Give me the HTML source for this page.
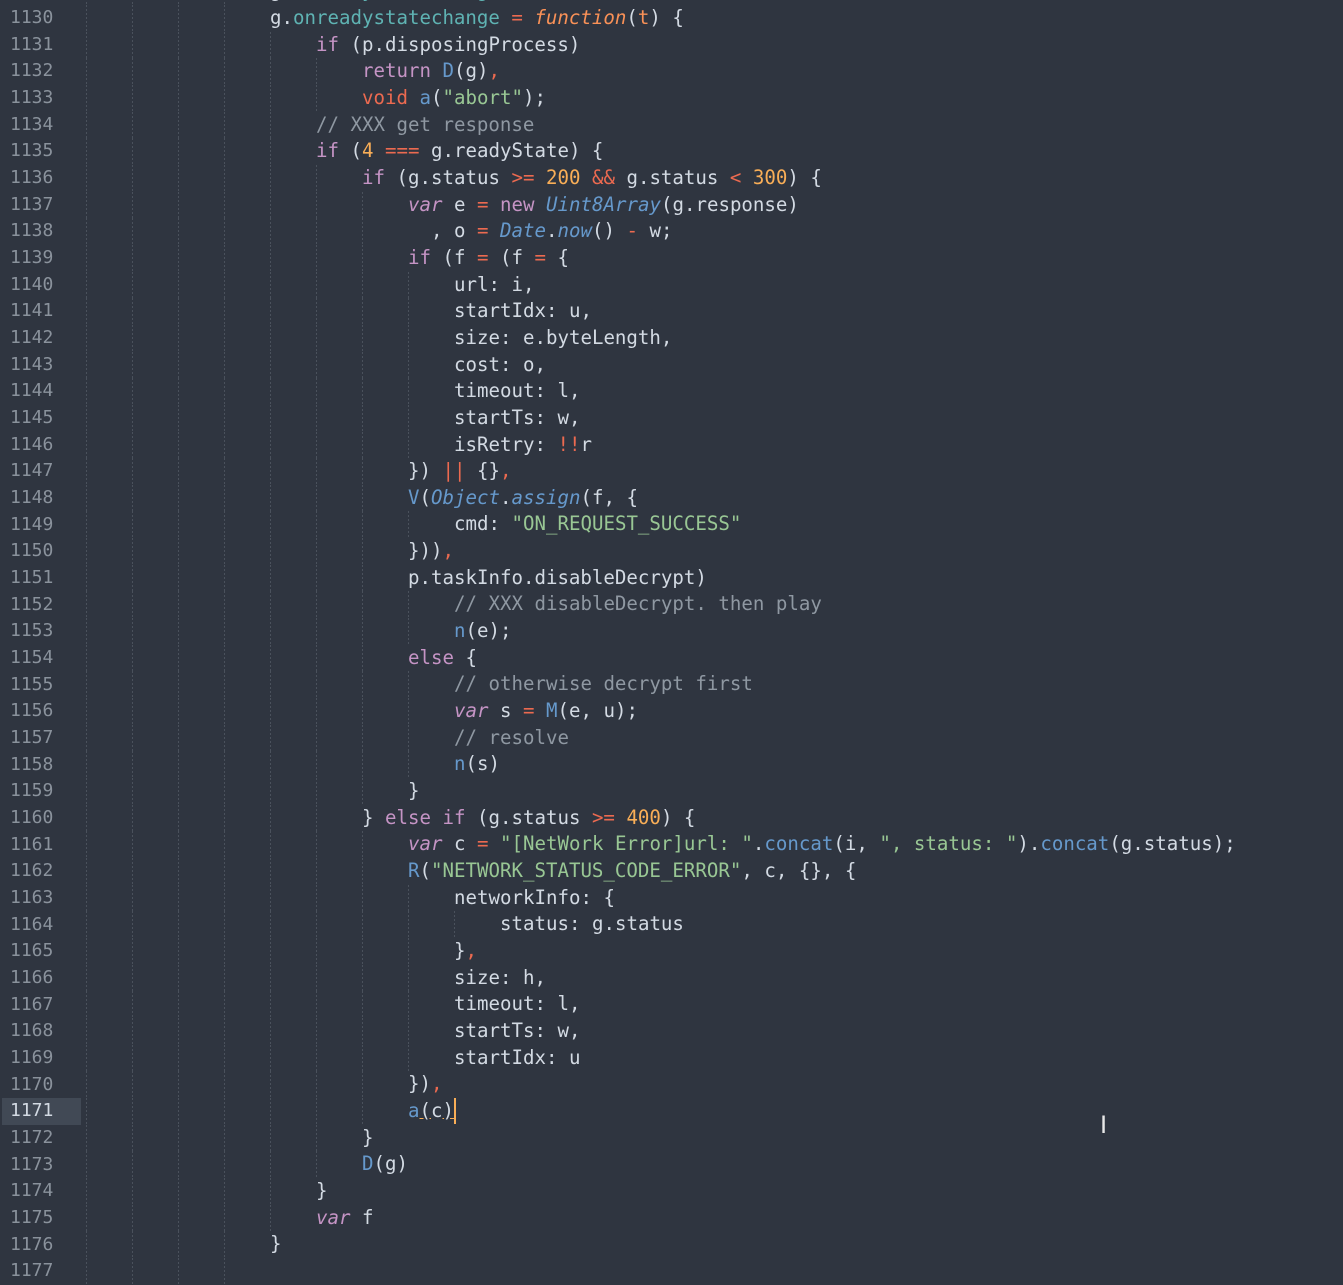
<!DOCTYPE html>
<html><head><meta charset="utf-8"><style>
body{margin:0;width:1343px;height:1270px;background:#2f3540;overflow:hidden;position:relative;font-family:"DejaVu Sans Mono","Liberation Mono",monospace;font-size:19.1px;}
#g{position:absolute;left:0;top:0;width:81px;height:1270px;background:#2f3540;}
.n{position:absolute;left:10px;height:26.67px;line-height:26.67px;color:#8a929c;font-size:18px;}
.hl{position:absolute;left:2px;width:79px;height:26.67px;background:#414955;}
#code{position:absolute;left:86px;top:5px;}
.l{height:26.67px;line-height:26.67px;white-space:pre;color:#d3dae3;}
i{display:inline-block;width:46px;height:26.67px;vertical-align:top;background:repeating-linear-gradient(to bottom,#4a515c 0 2px,transparent 2px 4px) left/1px 100% no-repeat;}
.k{color:#c594c5}.o{color:#ec6a50}.m{color:#f9ae57}.s{color:#99c794}.f{color:#6699cc}.c{color:#8f98a2}.t{color:#5fb3b3}.v{color:#c594c5;font-style:italic}.fi{color:#f99157;font-style:italic}.fb{color:#6699cc;font-style:italic}
.cur{display:inline-block;width:2px;height:26px;background:#f9ae57;vertical-align:top}
.u{text-decoration:underline;text-decoration-color:#f9ae57}
</style></head><body>
<div id="g">
<div class="l" style="position:absolute;left:10px;top:-22px;color:#8a929c;font-size:18px">1129</div>
<div class="hl" style="top:1098px"></div>
</div>
<div id="nums"></div>
<div id="code">
<div class="l" style="position:absolute;top:-26.67px;left:0"><i></i><i></i><i></i><i></i>g.<span class="t">onreadystatechange</span></div>
<div class="l"><i></i><i></i><i></i><i></i>g.<span class="t">onreadystatechange</span> <span class="o">=</span> <span class="fi">function</span>(<span class="fi" style="font-style:normal">t</span>) {</div>
<div class="l"><i></i><i></i><i></i><i></i><i></i><span class="k">if</span> (p.disposingProcess)</div>
<div class="l"><i></i><i></i><i></i><i></i><i></i><i></i><span class="k">return</span> <span class="f">D</span>(g)<span class="o">,</span></div>
<div class="l"><i></i><i></i><i></i><i></i><i></i><i></i><span class="o">void</span> <span class="f">a</span>(<span class="s">"abort"</span>);</div>
<div class="l"><i></i><i></i><i></i><i></i><i></i><span class="c">// XXX get response</span></div>
<div class="l"><i></i><i></i><i></i><i></i><i></i><span class="k">if</span> (<span class="m">4</span> <span class="o">===</span> g.readyState) {</div>
<div class="l"><i></i><i></i><i></i><i></i><i></i><i></i><span class="k">if</span> (g.status <span class="o">&gt;=</span> <span class="m">200</span> <span class="o">&amp;&amp;</span> g.status <span class="o">&lt;</span> <span class="m">300</span>) {</div>
<div class="l"><i></i><i></i><i></i><i></i><i></i><i></i><i></i><span class="v">var</span> e <span class="o">=</span> <span class="k">new</span> <span class="fb">Uint8Array</span>(g.response)</div>
<div class="l"><i></i><i></i><i></i><i></i><i></i><i></i><i></i>  , o <span class="o">=</span> <span class="fb">Date</span>.<span class="fb">now</span>() <span class="o">-</span> w;</div>
<div class="l"><i></i><i></i><i></i><i></i><i></i><i></i><i></i><span class="k">if</span> (f <span class="o">=</span> (f <span class="o">=</span> {</div>
<div class="l"><i></i><i></i><i></i><i></i><i></i><i></i><i></i><i></i>url: i,</div>
<div class="l"><i></i><i></i><i></i><i></i><i></i><i></i><i></i><i></i>startIdx: u,</div>
<div class="l"><i></i><i></i><i></i><i></i><i></i><i></i><i></i><i></i>size: e.byteLength,</div>
<div class="l"><i></i><i></i><i></i><i></i><i></i><i></i><i></i><i></i>cost: o,</div>
<div class="l"><i></i><i></i><i></i><i></i><i></i><i></i><i></i><i></i>timeout: l,</div>
<div class="l"><i></i><i></i><i></i><i></i><i></i><i></i><i></i><i></i>startTs: w,</div>
<div class="l"><i></i><i></i><i></i><i></i><i></i><i></i><i></i><i></i>isRetry: <span class="o">!!</span>r</div>
<div class="l"><i></i><i></i><i></i><i></i><i></i><i></i><i></i>}) <span class="o">||</span> {}<span class="o">,</span></div>
<div class="l"><i></i><i></i><i></i><i></i><i></i><i></i><i></i><span class="f">V</span>(<span class="fb">Object</span>.<span class="fb">assign</span>(f, {</div>
<div class="l"><i></i><i></i><i></i><i></i><i></i><i></i><i></i><i></i>cmd: <span class="s">"ON_REQUEST_SUCCESS"</span></div>
<div class="l"><i></i><i></i><i></i><i></i><i></i><i></i><i></i>}))<span class="o">,</span></div>
<div class="l"><i></i><i></i><i></i><i></i><i></i><i></i><i></i>p.taskInfo.disableDecrypt)</div>
<div class="l"><i></i><i></i><i></i><i></i><i></i><i></i><i></i><i></i><span class="c">// XXX disableDecrypt. then play</span></div>
<div class="l"><i></i><i></i><i></i><i></i><i></i><i></i><i></i><i></i><span class="f">n</span>(e);</div>
<div class="l"><i></i><i></i><i></i><i></i><i></i><i></i><i></i><span class="k">else</span> {</div>
<div class="l"><i></i><i></i><i></i><i></i><i></i><i></i><i></i><i></i><span class="c">// otherwise decrypt first</span></div>
<div class="l"><i></i><i></i><i></i><i></i><i></i><i></i><i></i><i></i><span class="v">var</span> s <span class="o">=</span> <span class="f">M</span>(e, u);</div>
<div class="l"><i></i><i></i><i></i><i></i><i></i><i></i><i></i><i></i><span class="c">// resolve</span></div>
<div class="l"><i></i><i></i><i></i><i></i><i></i><i></i><i></i><i></i><span class="f">n</span>(s)</div>
<div class="l"><i></i><i></i><i></i><i></i><i></i><i></i><i></i>}</div>
<div class="l"><i></i><i></i><i></i><i></i><i></i><i></i>} <span class="k">else</span> <span class="k">if</span> (g.status <span class="o">&gt;=</span> <span class="m">400</span>) {</div>
<div class="l"><i></i><i></i><i></i><i></i><i></i><i></i><i></i><span class="v">var</span> c <span class="o">=</span> <span class="s">"[NetWork Error]url: "</span>.<span class="f">concat</span>(i, <span class="s">", status: "</span>).<span class="f">concat</span>(g.status);</div>
<div class="l"><i></i><i></i><i></i><i></i><i></i><i></i><i></i><span class="f">R</span>(<span class="s">"NETWORK_STATUS_CODE_ERROR"</span>, c, {}, {</div>
<div class="l"><i></i><i></i><i></i><i></i><i></i><i></i><i></i><i></i>networkInfo: {</div>
<div class="l"><i></i><i></i><i></i><i></i><i></i><i></i><i></i><i></i><i></i>status: g.status</div>
<div class="l"><i></i><i></i><i></i><i></i><i></i><i></i><i></i><i></i>}<span class="o">,</span></div>
<div class="l"><i></i><i></i><i></i><i></i><i></i><i></i><i></i><i></i>size: h,</div>
<div class="l"><i></i><i></i><i></i><i></i><i></i><i></i><i></i><i></i>timeout: l,</div>
<div class="l"><i></i><i></i><i></i><i></i><i></i><i></i><i></i><i></i>startTs: w,</div>
<div class="l"><i></i><i></i><i></i><i></i><i></i><i></i><i></i><i></i>startIdx: u</div>
<div class="l"><i></i><i></i><i></i><i></i><i></i><i></i><i></i>})<span class="o">,</span></div>
<div class="l"><i></i><i></i><i></i><i></i><i></i><i></i><i></i><span class="f">a</span><span class="u">(</span>c<span class="u">)</span><span class="cur"></span></div>
<div class="l"><i></i><i></i><i></i><i></i><i></i><i></i>}</div>
<div class="l"><i></i><i></i><i></i><i></i><i></i><i></i><span class="f">D</span>(g)</div>
<div class="l"><i></i><i></i><i></i><i></i><i></i>}</div>
<div class="l"><i></i><i></i><i></i><i></i><i></i><span class="v">var</span> f</div>
<div class="l"><i></i><i></i><i></i><i></i>}</div>
<div class="l"><i></i><i></i><i></i><i></i></div>
</div>
<div style="position:absolute;left:0;top:5px">
<div class="n" style="top:0px">1130</div><div class="n" style="top:26.67px">1131</div><div class="n" style="top:53.33px">1132</div><div class="n" style="top:80px">1133</div><div class="n" style="top:106.67px">1134</div><div class="n" style="top:133.33px">1135</div><div class="n" style="top:160px">1136</div><div class="n" style="top:186.67px">1137</div><div class="n" style="top:213.33px">1138</div><div class="n" style="top:240px">1139</div><div class="n" style="top:266.67px">1140</div><div class="n" style="top:293.33px">1141</div><div class="n" style="top:320px">1142</div><div class="n" style="top:346.67px">1143</div><div class="n" style="top:373.33px">1144</div><div class="n" style="top:400px">1145</div><div class="n" style="top:426.67px">1146</div><div class="n" style="top:453.33px">1147</div><div class="n" style="top:480px">1148</div><div class="n" style="top:506.67px">1149</div><div class="n" style="top:533.33px">1150</div><div class="n" style="top:560px">1151</div><div class="n" style="top:586.67px">1152</div><div class="n" style="top:613.33px">1153</div><div class="n" style="top:640px">1154</div><div class="n" style="top:666.67px">1155</div><div class="n" style="top:693.33px">1156</div><div class="n" style="top:720px">1157</div><div class="n" style="top:746.67px">1158</div><div class="n" style="top:773.33px">1159</div><div class="n" style="top:800px">1160</div><div class="n" style="top:826.67px">1161</div><div class="n" style="top:853.33px">1162</div><div class="n" style="top:880px">1163</div><div class="n" style="top:906.67px">1164</div><div class="n" style="top:933.33px">1165</div><div class="n" style="top:960px">1166</div><div class="n" style="top:986.67px">1167</div><div class="n" style="top:1013.33px">1168</div><div class="n" style="top:1040px">1169</div><div class="n" style="top:1066.67px">1170</div><div class="n" style="top:1093.33px;color:#d3dae3">1171</div><div class="n" style="top:1120px">1172</div><div class="n" style="top:1146.67px">1173</div><div class="n" style="top:1173.33px">1174</div><div class="n" style="top:1200px">1175</div><div class="n" style="top:1226.67px">1176</div><div class="n" style="top:1253.33px">1177</div>
</div>
<div style="position:absolute;left:1100px;top:1113px;width:12px;height:25px;color:#e8e8e8;font-family:'DejaVu Sans';font-size:24px;line-height:25px">I</div>
</body></html>
